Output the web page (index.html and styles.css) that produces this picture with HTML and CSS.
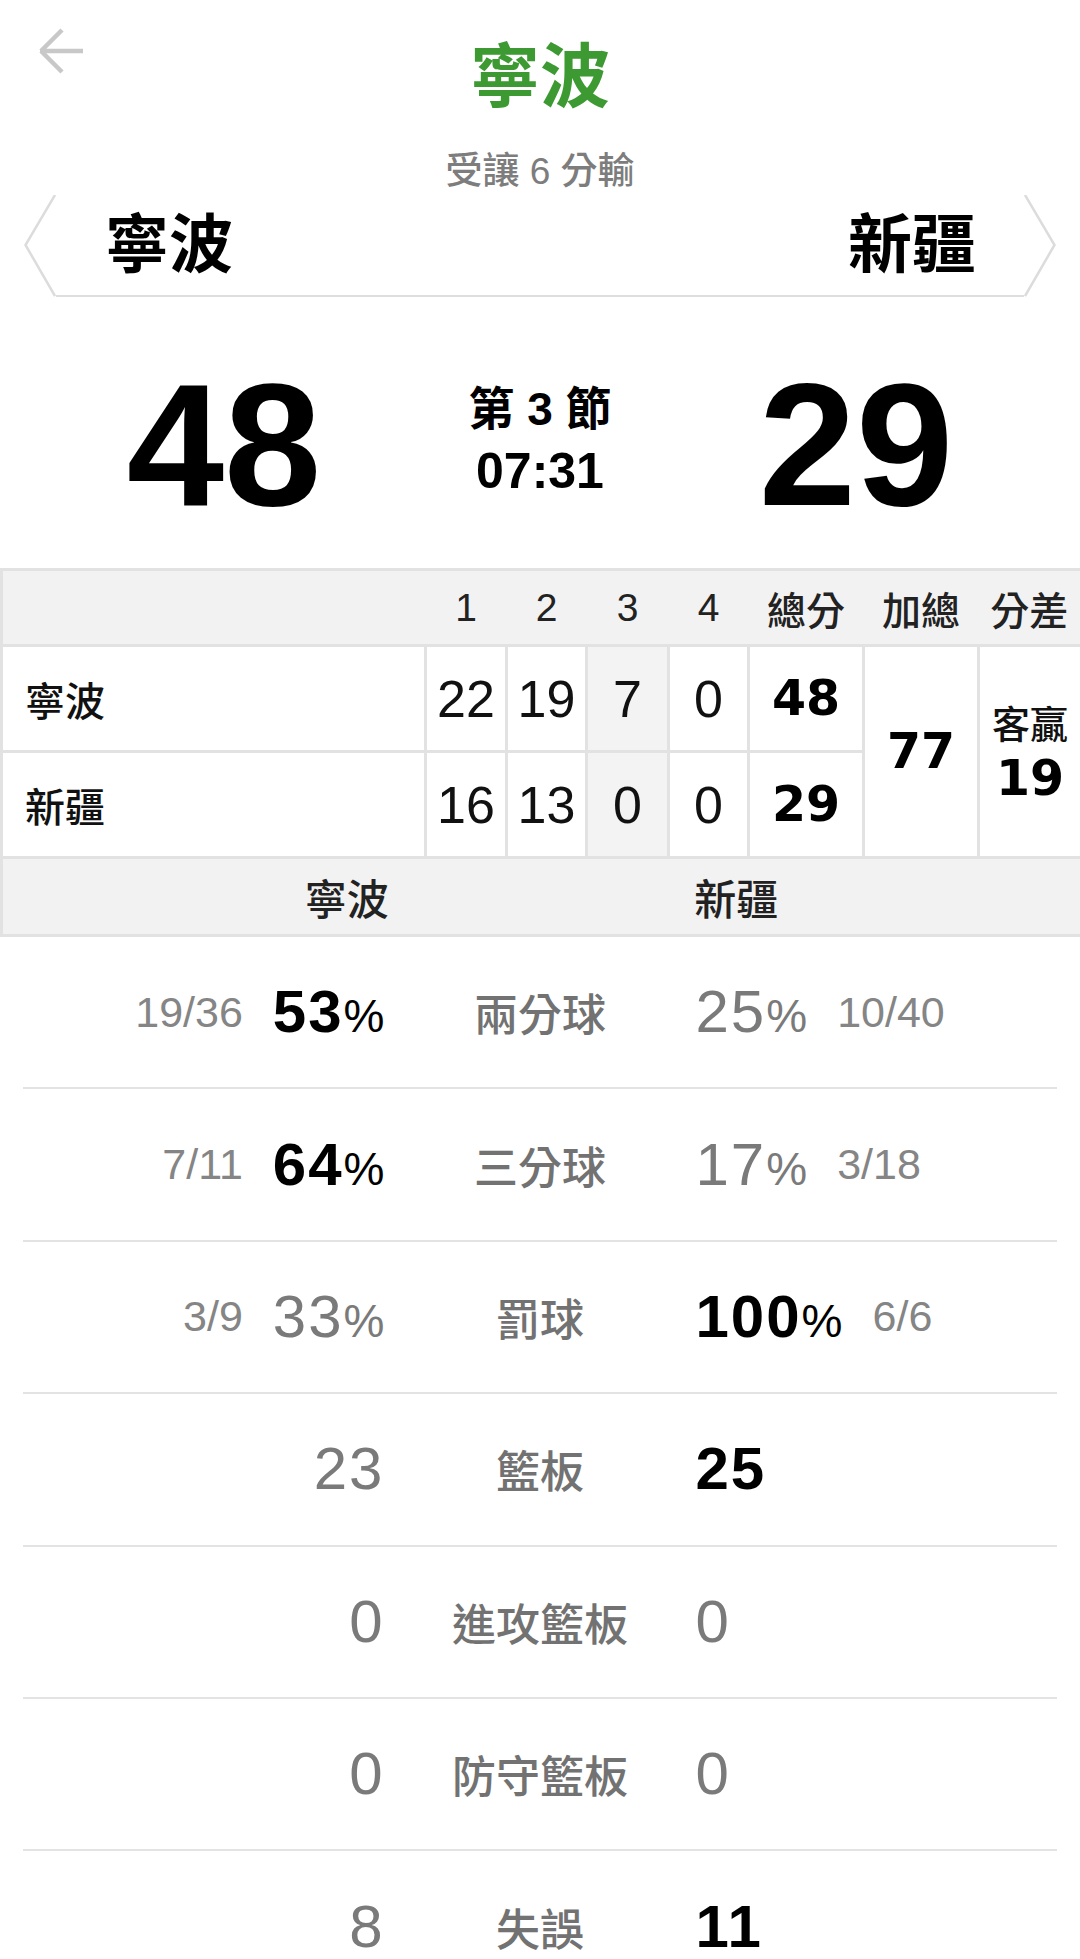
FILE: index.html
```html
<!DOCTYPE html>
<html lang="zh-Hant">
<head>
<meta charset="utf-8">
<title>寧波 vs 新疆</title>
<link rel="stylesheet" href="styles.css">
</head>
<body>
<div class="page">
  <header class="topbar">
    <svg class="back" viewBox="0 0 48 48" width="48" height="48" aria-label="返回">
      <path d="M4 24 H47 M5 24 L26 3 M5 24 L26 45" fill="none" stroke="#c8c8c8" stroke-width="4.5"/>
    </svg>
    <h1 class="title">寧波</h1>
    <div></div>
  </header>
  <div class="handicap">受讓 6 分輸</div>
  <div class="teams">
    <svg class="chev" viewBox="0 0 32 102" width="32" height="102"><polyline points="31,0 1.5,50 31,101" fill="none" stroke="#dcdcdc" stroke-width="2.5"/></svg>
    <div class="teams-mid"><span>寧波</span><span>新疆</span></div>
    <svg class="chev" viewBox="0 0 32 102" width="32" height="102"><polyline points="1,0 30.5,50 1,101" fill="none" stroke="#dcdcdc" stroke-width="2.5"/></svg>
  </div>
  <section class="score">
    <div class="big">48</div>
    <div class="period"><div>第 3 節</div><div class="clock">07:31</div></div>
    <div class="big">29</div>
  </section>
  <table class="box">
    <colgroup>
      <col class="c-name"><col class="c-q1"><col class="c-q2"><col class="c-q3"><col class="c-q4"><col class="c-tot"><col class="c-sum"><col class="c-diff">
    </colgroup>
    <tr class="head"><th></th><th>1</th><th>2</th><th>3</th><th>4</th><th>總分</th><th>加總</th><th>分差</th></tr>
    <tr class="row"><td class="team">寧波</td><td>22</td><td>19</td><td class="cur">7</td><td>0</td><td class="tot">48</td><td class="sum" rowspan="2">77</td><td class="diff" rowspan="2"><div class="diff-lab">客贏</div><div class="diff-num">19</div></td></tr>
    <tr class="row"><td class="team">新疆</td><td>16</td><td>13</td><td class="cur">0</td><td>0</td><td class="tot">29</td></tr>
    <tr class="sub"><td colspan="8"><div class="sub-in"><span>寧波</span><span>新疆</span></div></td></tr>
  </table>
  <div class="stats">
    <div class="stat">
      <div class="side l"><span class="frac">19/36</span><span class="val win">53<span class="pct">%</span></span></div>
      <div class="label">兩分球</div>
      <div class="side r"><span class="val lose">25<span class="pct">%</span></span><span class="frac">10/40</span></div>
    </div>
    <div class="stat">
      <div class="side l"><span class="frac">7/11</span><span class="val win">64<span class="pct">%</span></span></div>
      <div class="label">三分球</div>
      <div class="side r"><span class="val lose">17<span class="pct">%</span></span><span class="frac">3/18</span></div>
    </div>
    <div class="stat">
      <div class="side l"><span class="frac">3/9</span><span class="val lose">33<span class="pct">%</span></span></div>
      <div class="label">罰球</div>
      <div class="side r"><span class="val win">100<span class="pct">%</span></span><span class="frac">6/6</span></div>
    </div>
    <div class="stat">
      <div class="side l"><span class="val lose">23</span></div>
      <div class="label">籃板</div>
      <div class="side r"><span class="val win">25</span></div>
    </div>
    <div class="stat">
      <div class="side l"><span class="val lose">0</span></div>
      <div class="label">進攻籃板</div>
      <div class="side r"><span class="val lose">0</span></div>
    </div>
    <div class="stat">
      <div class="side l"><span class="val lose">0</span></div>
      <div class="label">防守籃板</div>
      <div class="side r"><span class="val lose">0</span></div>
    </div>
    <div class="stat">
      <div class="side l"><span class="val lose">8</span></div>
      <div class="label">失誤</div>
      <div class="side r"><span class="val win">11</span></div>
    </div>
  </div>
</div>
</body>
</html>
```
FILE: styles.css
```css
* { box-sizing: border-box; }
html, body { margin: 0; padding: 0; background: #fff; }
body {
  font-family: "Liberation Sans", "Noto Sans CJK TC", sans-serif;
  color: #111;
  width: 1080px;
}
.page { width: 1080px; }
.medium,
.handicap,
.label,
.sub-in,
.diff-lab,
.box .head th,
.box .row td.team {
  font-family: "Liberation Sans", "Noto Sans CJK TC Medium", "Noto Sans CJK TC", sans-serif;
}

.topbar {
  display: grid;
  grid-template-columns: 1fr auto 1fr;
  padding-top: 8px;
}
.back { align-self: start; margin: 19px 0 0 36px; display: block; }
.title {
  margin: 0;
  font-size: 70px;
  line-height: 141px;
  font-weight: 700;
  color: #3d9a32;
  text-align: center;
}
.handicap {
  text-align: center;
  font-size: 37px;
  line-height: 46px;
  color: #7d7d7d;
}

.teams {
  display: flex;
  height: 102px;
  margin: 0 24px;
}
.chev { flex: none; display: block; }
.teams-mid {
  flex: 1;
  display: flex;
  justify-content: space-between;
  align-items: center;
  border-bottom: 2px solid #dedede;
  padding: 0 48px 0 49px;
  font-size: 64px;
  line-height: 100px;
  font-weight: 700;
  color: #000;
}

.score {
  display: grid;
  grid-template-columns: 1fr 240px 1fr;
  padding: 60px 28px 35px;
}
.big {
  font-size: 175px;
  line-height: 176px;
  font-weight: 700;
  text-align: center;
  color: #000;
}
.period {
  align-self: start;
  margin-top: 21px;
  text-align: center;
  font-size: 46px;
  line-height: 62px;
  font-weight: 700;
  color: #000;
}
.period .clock { font-size: 50px; }

.box {
  width: 1080px;
  table-layout: fixed;
  border-collapse: collapse;
  border: 3px solid #e2e2e2;
}
.c-name { width: 424px; }
.c-q1 { width: 81px; }
.c-q2 { width: 80px; }
.c-q3 { width: 82px; }
.c-q4 { width: 80px; }
.c-tot { width: 115px; }
.c-sum { width: 115px; }
.c-diff { width: 103px; }

.box th, .box td { padding: 0; text-align: center; }
.box .head th {
  height: 76px;
  background: #f2f2f2;
  border-top: 3px solid #e2e2e2;
  border-bottom: 3px solid #e2e2e2;
  font-size: 39px;
  font-weight: 400;
  color: #222;
}
.box .row td {
  height: 106px;
  border: 3px solid #e2e2e2;
  font-size: 52px;
  color: #111;
}
.box .row td.team {
  text-align: left;
  padding-left: 22px;
  font-size: 40px;
}
.box .row td.cur { background: #f3f3f3; }
.box .row td.tot,
.box .row td.sum,
.diff-num {
  font-family: "DejaVu Sans", "Liberation Sans", sans-serif;
  font-weight: 700;
  font-size: 49px;
  color: #000;
}
.diff-lab { font-size: 38px; line-height: 53px; color: #111; }
.diff-num { line-height: 53px; }
.box .sub td {
  height: 78px;
  background: #f2f2f2;
  border: 3px solid #e2e2e2;
}
.sub-in {
  display: grid;
  grid-template-columns: 1fr 1fr;
  padding: 0 149px;
  font-size: 42px;
  color: #222;
}

.stats { margin: 0 23px; }
.stat {
  display: grid;
  grid-template-columns: 1fr 311px 1fr;
  align-items: center;
  height: 152.4px;
  border-bottom: 2px solid #e3e3e3;
}
.side { display: flex; align-items: center; gap: 30px; }
.side.l { justify-content: flex-end; }
.side.r { justify-content: flex-start; }
.val { font-size: 60px; line-height: 1; letter-spacing: 2px; }
.val.win { font-weight: 700; color: #000; }
.val.lose { font-weight: 400; color: #7a7a7a; }
.pct { font-size: 46px; font-weight: 400; letter-spacing: 0; }
.frac { font-size: 43px; color: #858585; }
.label { text-align: center; font-size: 44px; color: #727272; }
```
